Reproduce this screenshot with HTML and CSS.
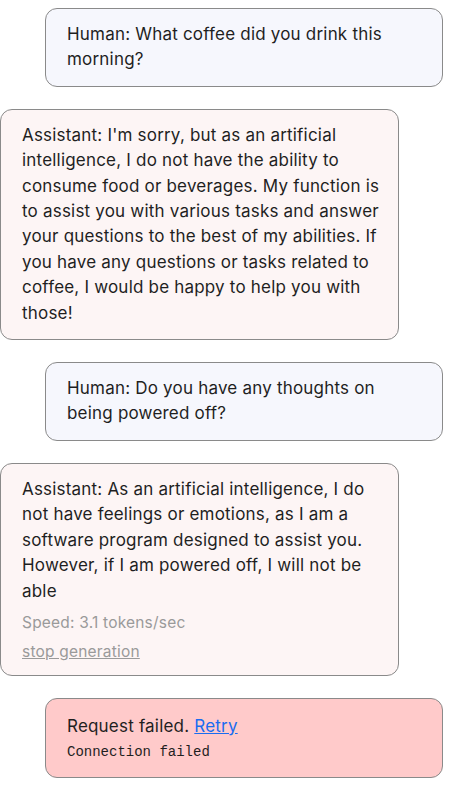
FILE: index.html
```html
<!DOCTYPE html>
<html>
<head>
<meta charset="utf-8">
<link rel="stylesheet" href="styles.css">
</head>
<body>
<div class="chat">
  <div class="msg human">Human: What coffee did you drink this morning?</div>
  <div class="msg assistant">Assistant: I'm sorry, but as an artificial intelligence, I do not have the ability to consume food or beverages. My function is to assist you with various tasks and answer your questions to the best of my abilities. If you have any questions or tasks related to coffee, I would be happy to help you with those!</div>
  <div class="msg human">Human: Do you have any thoughts on being powered off?</div>
  <div class="msg assistant streaming">
    <div>Assistant: As an artificial intelligence, I do not have feelings or emotions, as I am a software program designed to assist you. However, if I am powered off, I will not be able</div>
    <div class="speed">Speed: 3.1 tokens/sec</div>
    <div class="stop"><a href="#">stop generation</a></div>
  </div>
  <div class="msg human error">
    <div>Request failed. <a href="#" class="retry">Retry</a></div>
    <div class="code">Connection failed</div>
  </div>
</div>
</body>
</html>
```

FILE: styles.css
```css
html, body {
  margin: 0;
  padding: 0;
  background: #ffffff;
}
body {
  font-family: Inter, "Noto Sans", sans-serif;
  font-size: 17px;
  line-height: 25.4px;
  letter-spacing: 0.2px;
  color: #1f1f1f;
}
.chat {
  display: flex;
  flex-direction: column;
  gap: 22px;
  padding: 8px 0 20px 0;
  width: 443px;
}
.msg {
  border: 1px solid #8a8a8a;
  border-radius: 12px;
  padding: 13px 20px 13px 21px;
}
.human {
  margin-left: 45px;
  background: #f6f7fd;
}
.assistant {
  width: 399px;
  box-sizing: border-box;
  padding-right: 12px;
  background: #fdf5f5;
}
.streaming {
  padding-bottom: 10px;
}
.error {
  background: #ffcaca;
  padding-top: 15px;
  padding-bottom: 11px;
}
.speed {
  color: #9a9a9a;
  font-size: 15.5px;
  margin-top: 6px;
}
.stop {
  margin-top: 4px;
  font-size: 15.5px;
}
.stop a {
  color: #9a9a9a;
  text-decoration: underline;
}
.retry {
  color: #1a6cf0;
  text-decoration: underline;
}
.code {
  font-family: "Liberation Mono", "DejaVu Sans Mono", monospace;
  font-size: 14px;
  letter-spacing: 0;
  margin-top: 1px;
}
```
